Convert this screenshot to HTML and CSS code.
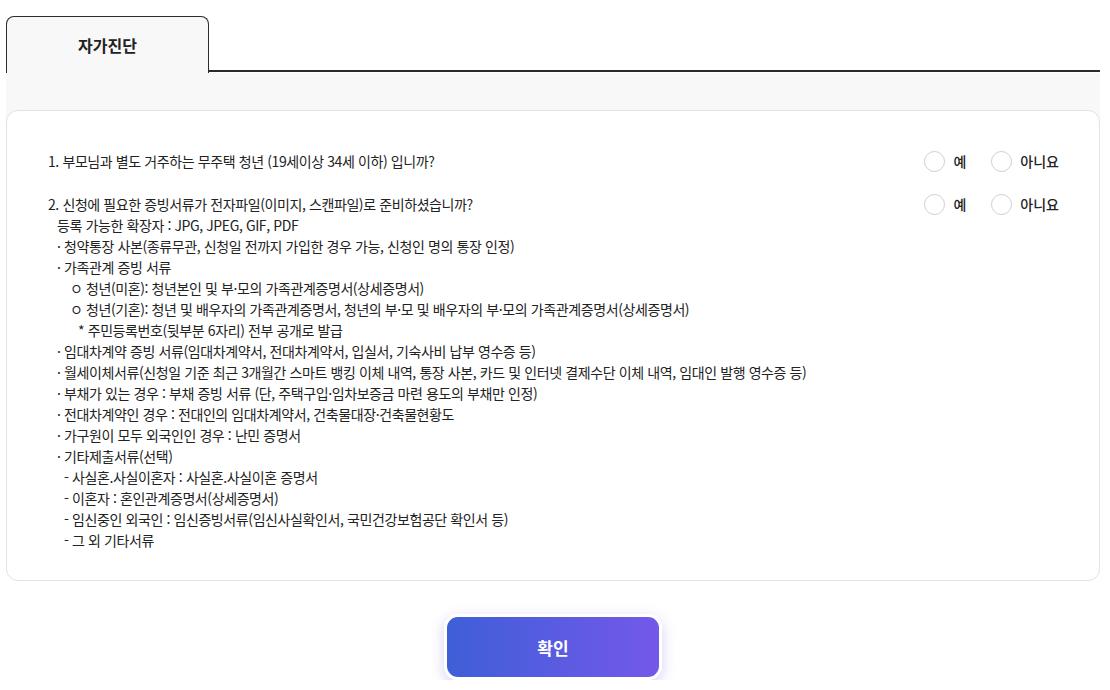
FILE: index.html
```html
<!DOCTYPE html>
<html lang="ko">

<head>
    <meta charset="UTF-8">
    <meta name="viewport" content="width=device-width, initial-scale=1.0">
    <title>자가진단</title>
    <link rel="stylesheet" href="styles.css">
</head>

<body>

    <div class="wrap">
        <div class="tabBar">
            <div class="tab">자가진단</div>
            <div class="tabLine"></div>
        </div>

        <div class="panel">
            <div class="card">
                <div class="question">
                    <p class="qText">1. 부모님과 별도 거주하는 무주택 청년 (19세이상 34세 이하) 입니까?</p>
                    <div class="answers">
                        <label class="radio"><input type="radio" name="q1"><span class="mark"></span>예</label>
                        <label class="radio"><input type="radio" name="q1"><span class="mark"></span>아니요</label>
                    </div>
                </div>

                <div class="question">
                    <div class="qBody">
                        <p class="qText">2. 신청에 필요한 증빙서류가 전자파일(이미지, 스캔파일)로 준비하셨습니까?</p>
                        <p class="lv1">등록 가능한 확장자 : JPG, JPEG, GIF, PDF</p>
                        <p class="lv1">· 청약통장 사본(종류무관, 신청일 전까지 가입한 경우 가능, 신청인 명의 통장 인정)</p>
                        <p class="lv1">· 가족관계 증빙 서류</p>
                        <p class="lv3">ㅇ 청년(미혼): 청년본인 및 부·모의 가족관계증명서(상세증명서)</p>
                        <p class="lv3">ㅇ 청년(기혼): 청년 및 배우자의 가족관계증명서, 청년의 부·모 및 배우자의 부·모의 가족관계증명서(상세증명서)</p>
                        <p class="lv4">* 주민등록번호(뒷부분 6자리) 전부 공개로 발급</p>
                        <p class="lv1">· 임대차계약 증빙 서류(임대차계약서, 전대차계약서, 입실서, 기숙사비 납부 영수증 등)</p>
                        <p class="lv1">· 월세이체서류(신청일 기준 최근 3개월간 스마트 뱅킹 이체 내역, 통장 사본, 카드 및 인터넷 결제수단 이체 내역, 임대인 발행 영수증 등)</p>
                        <p class="lv1">· 부채가 있는 경우 : 부채 증빙 서류 (단, 주택구입·임차보증금 마련 용도의 부채만 인정)</p>
                        <p class="lv1">· 전대차계약인 경우 : 전대인의 임대차계약서, 건축물대장·건축물현황도</p>
                        <p class="lv1">· 가구원이 모두 외국인인 경우 : 난민 증명서</p>
                        <p class="lv1">· 기타제출서류(선택)</p>
                        <p class="lv2">- 사실혼.사실이혼자 : 사실혼.사실이혼 증명서</p>
                        <p class="lv2">- 이혼자 : 혼인관계증명서(상세증명서)</p>
                        <p class="lv2">- 임신중인 외국인 : 임신증빙서류(임신사실확인서, 국민건강보험공단 확인서 등)</p>
                        <p class="lv2">- 그 외 기타서류</p>
                    </div>
                    <div class="answers">
                        <label class="radio"><input type="radio" name="q2"><span class="mark"></span>예</label>
                        <label class="radio"><input type="radio" name="q2"><span class="mark"></span>아니요</label>
                    </div>
                </div>
            </div>

            <div class="btnArea">
                <button class="btnOk">확인</button>
            </div>
        </div>
    </div>

</body>

</html>
```

FILE: styles.css
```css
body {
    margin: 0;
    font-family: "Noto Sans CJK KR", "Noto Sans", sans-serif;
    color: #222;
    background-color: #fff;
}

p {
    margin: 0;
}

.wrap {
    margin: 0 10px 0 6px;
    padding-top: 16px;
}

.tabBar {
    display: flex;
    align-items: flex-end;
}

.tab {
    width: 201px;
    height: 56px;
    line-height: 56px;
    border: 1px solid #2b2b2b;
    border-bottom: none;
    border-radius: 8px 8px 0 0;
    background-color: #f8f8f8;
    text-align: center;
    font-size: 16px;
    font-weight: bold;
}

.tabLine {
    flex: 1;
    border-bottom: 2px solid #2b2b2b;
    margin-bottom: 1px;
}

.panel {
    background: linear-gradient(#f8f8f8 0, #f8f8f8 60px, #fff 60px);
    padding-top: 37px;
}

.card {
    background-color: #fff;
    border: 1px solid #e3e3e3;
    border-radius: 12px;
    padding: 40px 40px 29px 41px;
}

.question {
    display: flex;
    justify-content: space-between;
    align-items: flex-start;
    font-size: 14px;
    line-height: 21px;
    letter-spacing: -0.4px;
}

.question+.question {
    margin-top: 22px;
}

.answers {
    display: flex;
    gap: 25px;
    letter-spacing: 0;
}

.radio {
    display: flex;
    align-items: center;
    gap: 8px;
    font-weight: 500;
    cursor: pointer;
}

.radio input {
    display: none;
}

.mark {
    width: 19px;
    height: 19px;
    border: 1px solid #cfcfcf;
    border-radius: 50%;
    background-color: #fff;
}

.radio input:checked+.mark {
    border: 6px solid #5a5ce0;
    width: 9px;
    height: 9px;
}

.lv1 {
    padding-left: 9px;
}

.lv2 {
    padding-left: 16px;
}

.lv3 {
    padding-left: 22px;
}

.lv4 {
    padding-left: 30px;
}

.btnArea {
    display: flex;
    justify-content: center;
    padding-top: 33px;
}

.btnOk {
    appearance: none;
    width: 218px;
    height: 66px;
    border: 3px solid #fff;
    border-radius: 14px;
    background: linear-gradient(90deg, #3e5fd7, #7458ea);
    box-shadow: 0 4px 14px rgba(100, 90, 220, 0.28);
    color: #fff;
    font-family: inherit;
    font-size: 17px;
    font-weight: bold;
    cursor: pointer;
}
```
